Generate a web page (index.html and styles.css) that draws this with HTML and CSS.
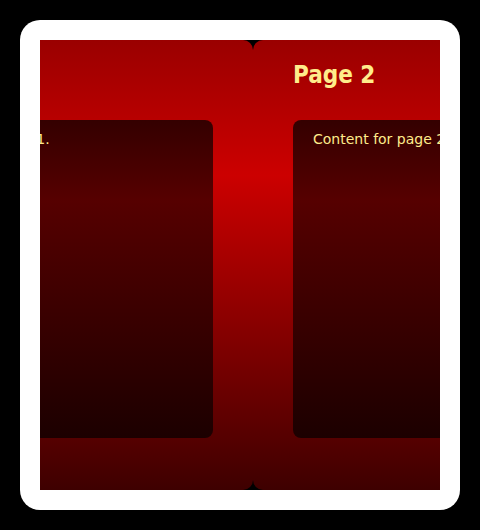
FILE: index.html
```html
<!DOCTYPE html>
<html lang="en">
<head>
    <meta charset="UTF-8">
    <meta name="viewport" content="width=device-width, initial-scale=1.0">
    <title>Pages</title>
    <link rel="stylesheet" href="styles.css">
</head>
<body>
<div class="frame">
    <div class="viewport">
        <div class="track">
            <div class="page">
                <h2 class="page-title">Page 1</h2>
                <div class="page-body">Content for page 1.</div>
            </div>
            <div class="page">
                <h2 class="page-title">Page 2</h2>
                <div class="page-body">Content for page 2.</div>
            </div>
        </div>
    </div>
</div>
</body>
</html>
```

FILE: styles.css
```css
body {
    margin: 0;
    background: #000;
    font-family: "DejaVu Sans", Verdana, sans-serif;
    color: #ffec8b;
}

.frame {
    margin: 20px;
    width: 400px;
    height: 450px;
    padding: 20px;
    background: #fff;
    border-radius: 20px;
}

.viewport {
    width: 400px;
    height: 450px;
    overflow: hidden;
    background: #000;
}

/* scrolled part way between page 1 and page 2 */
.track {
    display: flex;
    transform: translateX(-187px);
}

.page {
    flex: 0 0 400px;
    height: 450px;
    box-sizing: border-box;
    padding: 21px 40px 52px;
    display: flex;
    flex-direction: column;
    border-radius: 10px;
    background: linear-gradient(#9a0000, #cc0000 30%, #3e0000);
}

.page-title {
    margin: 0 0 31px;
    font-family: "DejaVu Sans Condensed", "DejaVu Sans", sans-serif;
    font-size: 24px;
    line-height: 28px;
    font-weight: bold;
}

.page-body {
    flex: 1;
    padding: 11px 20px;
    font-size: 14px;
    line-height: 16px;
    white-space: nowrap;
    border-radius: 8px;
    background: linear-gradient(#340000, #560000 25%, #1c0000);
}
```
